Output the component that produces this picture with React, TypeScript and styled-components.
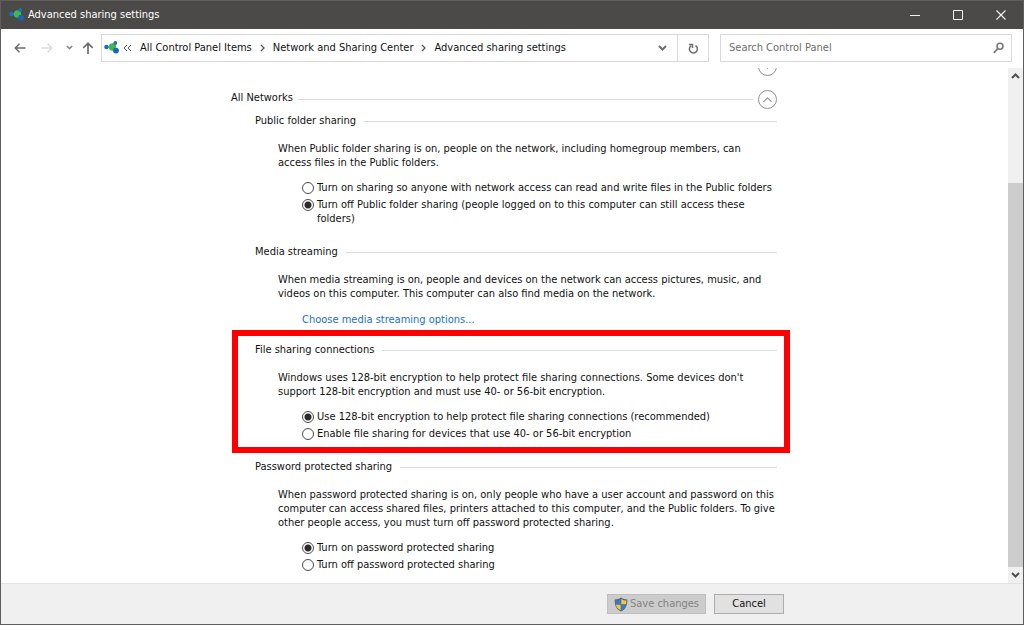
import React, { useState } from "react";
import styled, { createGlobalStyle, css } from "styled-components";

const GlobalStyle = createGlobalStyle`
  *, *::before, *::after { box-sizing: border-box; }
  body {
    margin: 0;
    background: #fff;
    color: #111;
    font-family: "DejaVu Sans Condensed", "Open Sans", sans-serif;
    font-size: 11px;
    line-height: 14px;
  }
  button, input { font: inherit; color: inherit; }
  h1, h2, h3, p { margin: 0; font: inherit; }
`;

const Window = styled.div`
  display: flex;
  flex-direction: column;
  height: 100vh;
  border: 1px solid #5f5e5d;
  background: #fff;
`;

const TitleBar = styled.header`
  display: flex;
  align-items: center;
  flex: none;
  height: 28px;
  padding: 0 1px 0 8px;
  background: #4c4a48;
  color: #fff;
`;

const WindowTitle = styled.h1`
  flex: 1;
  padding-left: 4px;
`;

const CaptionButton = styled.button`
  display: grid;
  place-items: center;
  width: 43px;
  height: 28px;
  padding: 0;
  border: 0;
  background: none;
  color: #f2f2f2;
`;

const NavBar = styled.nav`
  display: flex;
  align-items: center;
  flex: none;
  height: 39px;
  padding: 0 11px 2px 9px;
`;

const NavButton = styled.button<{ $width: number; $color?: string }>`
  display: grid;
  place-items: center;
  flex: none;
  width: ${(p) => p.$width}px;
  height: 28px;
  padding: 0;
  border: 0;
  background: none;
  color: ${(p) => p.$color ?? "#6e6e6e"};
`;

const AddressBar = styled.div`
  display: flex;
  align-items: center;
  flex: 1;
  min-width: 0;
  height: 28px;
  padding-left: 2px;
  border: 1px solid #d9d9d9;
`;

const Crumbs = styled.ol`
  display: flex;
  align-items: center;
  flex: 1;
  min-width: 0;
  margin: 0;
  padding: 0;
  list-style: none;
  white-space: nowrap;
`;

const Crumb = styled.li`
  display: flex;
  align-items: center;
`;

const CrumbLink = styled.a`
  color: inherit;
  text-decoration: none;
`;

const CrumbArrow = styled.svg`
  width: 21px;
  height: 8px;
  color: #555;
`;

const RefreshCell = styled.div`
  height: 26px;
  border-left: 1px solid #d9d9d9;
`;

const SearchBox = styled.label`
  display: flex;
  align-items: center;
  flex: 0 1 292px;
  min-width: 0;
  height: 28px;
  margin-left: 11px;
  padding: 0 7px 0 8px;
  border: 1px solid #d9d9d9;
  color: #767676;
`;

const SearchInput = styled.input`
  flex: 1;
  min-width: 0;
  padding: 0;
  border: 0;
  outline: 0;
  background: none;
  &::placeholder { color: #6d6d6d; opacity: 1; }
`;

const Body = styled.div`
  display: flex;
  flex: 1;
  min-height: 0;
`;

const Viewport = styled.main`
  display: flex;
  flex-direction: column;
  justify-content: flex-end;
  flex: 1;
  min-width: 0;
  padding-right: 1px;
  overflow: hidden;
`;

const Settings = styled.div`
  display: flex;
  flex-direction: column;
  gap: 14px;
  width: 100%;
  max-width: 546px;
  margin: 0 auto;
  padding-bottom: 11px;
`;

const GroupHeader = styled.div`
  display: flex;
  align-items: center;
  gap: 5px;
  height: 19px;
`;

const GroupTitle = styled.h2`
  padding-bottom: 4px;
`;

const Rule = styled.span`
  flex: 1;
  height: 1px;
  background: #dadada;
`;

const ToggleButton = styled.button`
  display: grid;
  place-items: center;
  width: 19px;
  height: 19px;
  padding: 0;
  border: 1px solid #8f8f8f;
  border-radius: 50%;
  background: #fff;
  color: #9a9a9a;
`;

const Sections = styled.div`
  display: flex;
  flex-direction: column;
  padding: 5px 0 0 24px;
`;

const Section = styled.section<{ $highlighted?: boolean; $compact?: boolean }>`
  position: relative;
  margin-bottom: ${(p) => (p.$compact ? 16 : 19)}px;
  &:last-child { margin-bottom: 0; }
  ${(p) =>
    p.$highlighted &&
    css`
      &::after {
        content: "";
        position: absolute;
        inset: -13px -13px -12px -23px;
        border: 6px solid #fe0000;
        pointer-events: none;
      }
    `}
`;

const SectionHeader = styled.div`
  display: flex;
  align-items: center;
  gap: 8px;
`;

const SectionBody = styled.div`
  padding: 14px 0 0 23px;
`;

const Options = styled.div`
  display: flex;
  flex-direction: column;
  align-items: flex-start;
  gap: 3px;
  padding: 11px 0 0 24px;
`;

const Option = styled.label`
  display: flex;
  align-items: flex-start;
  gap: 3px;
`;

const Radio = styled.input`
  appearance: none;
  flex: none;
  width: 12px;
  height: 12px;
  margin: 1px 0 0;
  border: 1px solid #4a4a4a;
  border-radius: 50%;
  background: #fff;
  &:checked {
    background: radial-gradient(circle, #2b2b2b 3px, #fff 4px);
  }
`;

const LinkRow = styled.div`
  padding: 12px 0 0 24px;
`;

const TextLink = styled.a`
  color: #1a6fd0;
  text-decoration: none;
`;

const ScrollBar = styled.div`
  display: flex;
  flex-direction: column;
  flex: none;
  width: 15px;
  background: #f0f0f0;
`;

const ScrollButton = styled.button`
  display: grid;
  place-items: center;
  width: 100%;
  height: 16px;
  padding: 0;
  border: 0;
  background: none;
  color: #505050;
`;

const ScrollTrack = styled.div`
  display: grid;
  grid-template-rows: 99fr 385fr;
  flex: 1;
`;

const ScrollThumb = styled.div`
  grid-row: 2;
  background: #cdcdcd;
`;

const Footer = styled.footer`
  display: flex;
  flex: none;
  gap: 8px;
  justify-content: flex-end;
  height: 41px;
  padding: 10px 239px 0 0;
  border-top: 1px solid #e2e2e2;
  background: #f0f0f0;
`;

const PushButton = styled.button<{ $width: number }>`
  display: flex;
  align-items: center;
  justify-content: center;
  gap: 2px;
  width: ${(p) => p.$width}px;
  height: 20px;
  padding: 0;
  border: 1px solid #adadad;
  background: #e1e1e1;
  white-space: nowrap;
  &:disabled {
    border-color: #bfbfbf;
    background: #cccccc;
    color: #838383;
  }
`;

const NetworkIcon = () => (
  <svg width="15" height="14" viewBox="0 0 15 14" aria-hidden="true">
    <path d="M3 6L9 6L11 2M9 6L12 10" stroke="#7fb4d8" strokeWidth="1" fill="none" />
    <circle cx="8.5" cy="6" r="3.7" fill="#3fb84f" />
    <circle cx="2.5" cy="6" r="2.3" fill="#1b6fc0" />
    <circle cx="11.3" cy="2" r="1.9" fill="#1b6fc0" />
    <circle cx="12" cy="9.6" r="2.9" fill="#1766b8" />
  </svg>
);

const ShieldIcon = () => (
  <svg width="14" height="15" viewBox="0 0 14 15" aria-hidden="true">
    <path d="M7 .5C5 2 3 2.400 .7 2.400C.5 8 2 12 7 14.500C12 12 13.500 8 13.300 2.400C11 2.400 9 2 7 .5Z" fill="#5d6670" />
    <path d="M6.700 1.900C5 3 3.500 3.400 1.800 3.500V7.200H6.700Z" fill="#2f7fd0" />
    <path d="M7.300 1.900C9 3 10.500 3.400 12.200 3.500V7.200H7.300Z" fill="#f7c34a" />
    <path d="M1.900 7.700C2.300 10.200 3.800 12 6.700 13.300V7.700Z" fill="#f7c34a" />
    <path d="M12.100 7.700C11.700 10.200 10.200 12 7.300 13.300V7.700Z" fill="#2f7fd0" />
  </svg>
);

type ChevronProps = { up?: boolean; width?: number; height?: number; weight?: number };

const Chevron = ({ up, width = 9, height = 6, weight = 2 }: ChevronProps) => (
  <svg width={width} height={height} viewBox="0 0 9 6" fill="none" aria-hidden="true">
    <path d={up ? "M1 5L4.500 1.500L8 5" : "M1 1L4.500 4.500L8 1"} stroke="currentColor" strokeWidth={weight} />
  </svg>
);

const crumbs = ["All Control Panel Items", "Network and Sharing Center", "Advanced sharing settings"];

type SectionData = {
  id: string;
  title: string;
  text: string;
  options?: string[];
  selected?: number;
  link?: string;
  highlighted?: boolean;
};

const sections: SectionData[] = [
  {
    id: "public",
    title: "Public folder sharing",
    text: "When Public folder sharing is on, people on the network, including homegroup members, can access files in the Public folders.",
    options: [
      "Turn on sharing so anyone with network access can read and write files in the Public folders",
      "Turn off Public folder sharing (people logged on to this computer can still access these folders)",
    ],
    selected: 1,
  },
  {
    id: "media",
    title: "Media streaming",
    text: "When media streaming is on, people and devices on the network can access pictures, music, and videos on this computer. This computer can also find media on the network.",
    link: "Choose media streaming options...",
  },
  {
    id: "encryption",
    title: "File sharing connections",
    text: "Windows uses 128-bit encryption to help protect file sharing connections. Some devices don't support 128-bit encryption and must use 40- or 56-bit encryption.",
    options: [
      "Use 128-bit encryption to help protect file sharing connections (recommended)",
      "Enable file sharing for devices that use 40- or 56-bit encryption",
    ],
    selected: 0,
    highlighted: true,
  },
  {
    id: "password",
    title: "Password protected sharing",
    text: "When password protected sharing is on, only people who have a user account and password on this computer can access shared files, printers attached to this computer, and the Public folders. To give other people access, you must turn off password protected sharing.",
    options: ["Turn on password protected sharing", "Turn off password protected sharing"],
    selected: 0,
  },
];

const SettingSection = ({ data }: { data: SectionData }) => {
  const [selected, setSelected] = useState(data.selected);
  return (
    <Section $highlighted={data.highlighted} $compact={!data.options} aria-labelledby={`${data.id}-title`}>
      <SectionHeader>
        <h3 id={`${data.id}-title`}>{data.title}</h3>
        <Rule />
      </SectionHeader>
      <SectionBody>
        <p>{data.text}</p>
        {data.options && (
          <Options role="radiogroup" aria-labelledby={`${data.id}-title`}>
            {data.options.map((option, i) => (
              <Option key={option}>
                <Radio type="radio" name={data.id} checked={selected === i} onChange={() => setSelected(i)} />
                <span>{option}</span>
              </Option>
            ))}
          </Options>
        )}
        {data.link && (
          <LinkRow>
            <TextLink href="#media">{data.link}</TextLink>
          </LinkRow>
        )}
      </SectionBody>
    </Section>
  );
};

export default function App() {
  return (
    <>
      <GlobalStyle />
      <Window>
        <TitleBar>
          <NetworkIcon />
          <WindowTitle>Advanced sharing settings</WindowTitle>
          <CaptionButton aria-label="Minimize">
            <svg width="10" height="10" viewBox="0 0 10 10"><path d="M0 5.500H10" stroke="currentColor" /></svg>
          </CaptionButton>
          <CaptionButton aria-label="Maximize">
            <svg width="10" height="10" viewBox="0 0 10 10"><path d="M.5 .5H9.500V9.500H.5Z" fill="none" stroke="currentColor" /></svg>
          </CaptionButton>
          <CaptionButton aria-label="Close">
            <svg width="10" height="10" viewBox="0 0 10 10"><path d="M.5 .5L9.500 9.500M9.500 .5L.5 9.500" stroke="currentColor" strokeWidth="1.200" /></svg>
          </CaptionButton>
        </TitleBar>

        <NavBar aria-label="Address">
          <NavButton $width={20} aria-label="Back">
            <svg width="12" height="10" viewBox="0 0 12 10" fill="none" stroke="currentColor" strokeWidth="1.600"><path d="M11.500 5H1.500M5.500 .8L1.300 5L5.500 9.200" /></svg>
          </NavButton>
          <NavButton $width={34} $color="#dcdcdc" aria-label="Forward">
            <svg width="12" height="10" viewBox="0 0 12 10" fill="none" stroke="currentColor" strokeWidth="1.600"><path d="M.5 5H10.500M6.500 .8L10.700 5L6.500 9.200" /></svg>
          </NavButton>
          <NavButton $width={10} $color="#8a8a8a" aria-label="Recent locations">
            <Chevron width={7} height={5} />
          </NavButton>
          <NavButton $width={27} aria-label="Up">
            <svg width="12" height="12" viewBox="0 0 12 12" fill="none" stroke="currentColor" strokeWidth="1.700"><path d="M6 12V1.500M1.200 6L6 1.300L10.800 6" /></svg>
          </NavButton>
          <AddressBar>
            <NetworkIcon />
            <CrumbArrow viewBox="0 0 21 8" fill="none" stroke="currentColor"><path d="M8 1L5 4L8 7M12 1L9 4L12 7" /></CrumbArrow>
            <Crumbs>
              {crumbs.map((crumb, i) => (
                <Crumb key={crumb}>
                  {i > 0 && (
                    <CrumbArrow viewBox="0 0 21 8" fill="none" stroke="currentColor" strokeWidth="1.300"><path d="M9 1L12 4L9 7" /></CrumbArrow>
                  )}
                  <CrumbLink href="#">{crumb}</CrumbLink>
                </Crumb>
              ))}
            </Crumbs>
            <NavButton $width={30} aria-label="Previous locations">
              <Chevron />
            </NavButton>
            <RefreshCell>
              <NavButton $width={30} aria-label="Refresh">
                <svg width="11" height="12" viewBox="0 0 11 12" fill="none" stroke="currentColor" strokeWidth="1.500"><path d="M7.500 2.600A4 4 0 1 1 3 2.800M1 1.500H4.500V5" /></svg>
              </NavButton>
            </RefreshCell>
          </AddressBar>
          <SearchBox>
            <SearchInput type="text" placeholder="Search Control Panel" aria-label="Search Control Panel" />
            <svg width="11" height="12" viewBox="0 0 11 12" fill="none" stroke="currentColor" strokeWidth="1.500" aria-hidden="true">
              <circle cx="7" cy="4.200" r="3" />
              <path d="M4.800 6.500L.8 10.800" strokeWidth="1.800" />
            </svg>
          </SearchBox>
        </NavBar>

        <Body>
          <Viewport>
            <Settings>
              <GroupHeader>
                <Rule />
                <ToggleButton aria-label="Expand group"><Chevron weight={1} /></ToggleButton>
              </GroupHeader>
              <div>
                <GroupHeader>
                  <GroupTitle>All Networks</GroupTitle>
                  <Rule />
                  <ToggleButton aria-label="Collapse All Networks"><Chevron up width={11} height={7} weight={1} /></ToggleButton>
                </GroupHeader>
                <Sections>
                  {sections.map((s) => (
                    <SettingSection key={s.id} data={s} />
                  ))}
                </Sections>
              </div>
            </Settings>
          </Viewport>
          <ScrollBar>
            <ScrollButton aria-label="Scroll up"><Chevron up /></ScrollButton>
            <ScrollTrack><ScrollThumb /></ScrollTrack>
            <ScrollButton aria-label="Scroll down"><Chevron /></ScrollButton>
          </ScrollBar>
        </Body>

        <Footer>
          <PushButton $width={99} disabled><ShieldIcon />Save changes</PushButton>
          <PushButton $width={70}>Cancel</PushButton>
        </Footer>
      </Window>
    </>
  );
}
